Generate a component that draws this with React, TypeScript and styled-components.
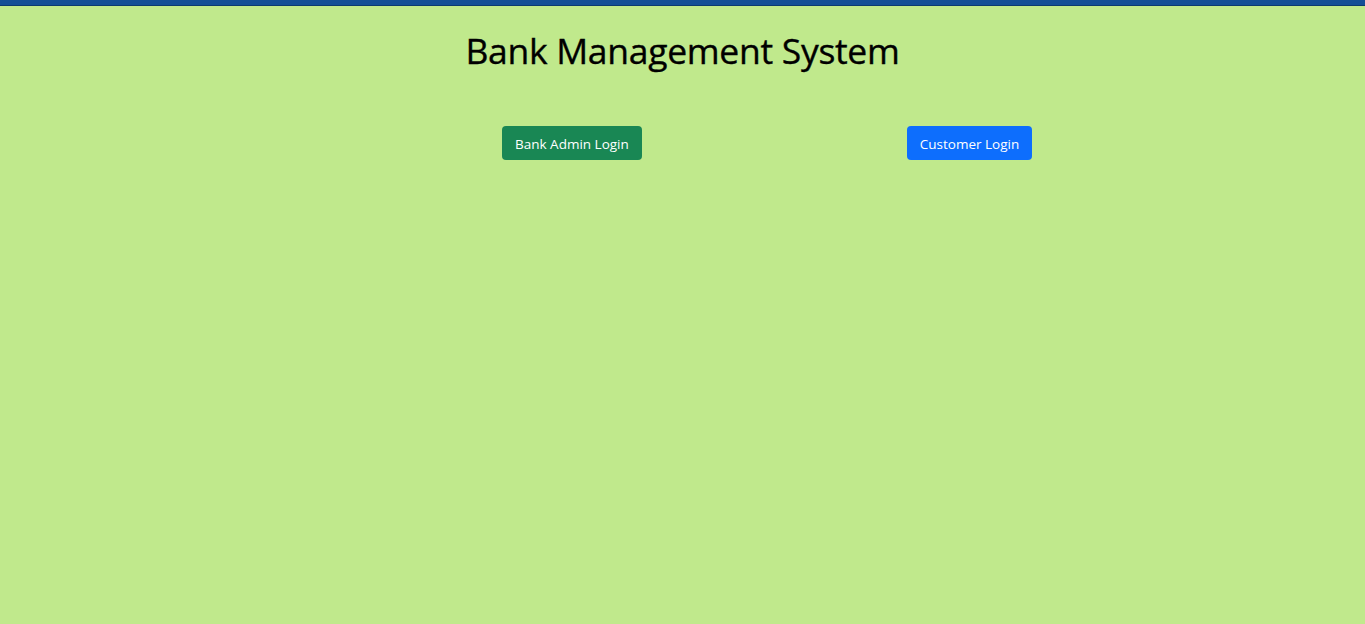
import React from "react";
import styled, { createGlobalStyle } from "styled-components";

const Global = createGlobalStyle`
  html, body { margin: 0; padding: 0; }
  body {
    background: #c0e98c;
    font-family: "Open Sans", "Noto Sans", sans-serif;
    min-height: 624px;
  }
`;

const TopBar = styled.div`
  height: 5px;
  background: #134f96;
  border-bottom: 1px solid #0b3a70;
`;

const Title = styled.h1`
  margin: 0;
  padding-top: 23px;
  text-align: center;
  font-size: 35.5px;
  font-weight: 500;
  line-height: 1.2;
  color: #000;
  letter-spacing: -0.3px;
  -webkit-text-stroke: 0.35px #000;
`;

const Row = styled.div`
  display: flex;
  align-items: flex-start;
  padding-left: 502px;
  gap: 265px;
  margin-top: 54px;
`;

const Button = styled.button<{ $variant: "green" | "blue" }>`
  box-sizing: border-box;
  font-family: "Open Sans", "Noto Sans", sans-serif;
  font-size: 13.5px;
  line-height: 21px;
  height: 34px;
  padding: 3px 13px 0;
  border: none;
  border-radius: 4px;
  color: #fff;
  background: ${(p) => (p.$variant === "green" ? "#198754" : "#0d6efd")};
  cursor: pointer;
`;

export default function App() {
  return (
    <>
      <Global />
      <TopBar />
      <Title>Bank Management System</Title>
      <Row>
        <Button $variant="green">Bank Admin Login</Button>
        <Button $variant="blue">Customer Login</Button>
      </Row>
    </>
  );
}
